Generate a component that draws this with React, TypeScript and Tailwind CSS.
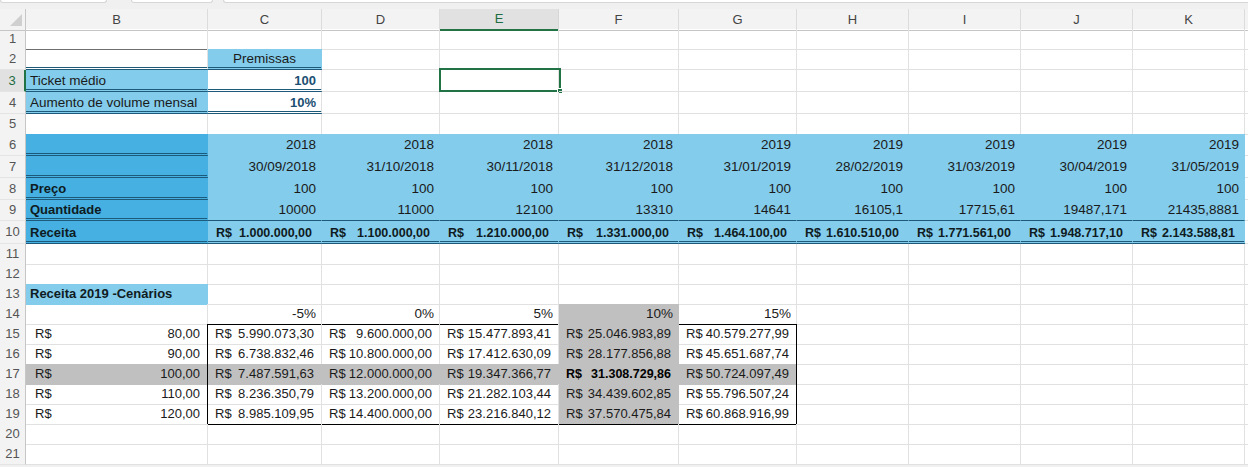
import React from "react";

const GRID =
  "grid grid-cols-[26px_182px_114px_118px_119px_120px_118px_112px_112px_112px_112px_1fr]";

// border presets
const R_GRID = "border-r border-r-[#e1e1e1]";
const B_GRID = "border-b border-b-[#e1e1e1]";
const R_L = "border-r border-r-[#83cceb]";
const B_L = "border-b border-b-[#83cceb]";
const R_M = "border-r border-r-[#45b0e1]";
const R_G = "border-r border-r-[#c0c0c0]";
const B_G = "border-b border-b-[#c0c0c0]";
const B_DBL = "border-double border-b-[3px] border-b-[#1d5a7a]";
const B_DARK = "border-b border-b-[#1d5a7a]";
const B_BLACK = "border-b border-b-black";
const R_BLACK = "border-r border-r-black";

type CellProps = {
  children?: React.ReactNode;
  className?: string;
  r?: string;
  b?: string;
  align?: "l" | "r" | "c" | "acc";
  pb?: string;
};

function Cell({ children, className = "", r = R_GRID, b = B_GRID, align = "l", pb }: CellProps) {
  const j =
    align === "r"
      ? "justify-end pr-[5px] pl-[4px]"
      : align === "c"
        ? "justify-center px-[4px]"
        : align === "acc"
          ? "justify-between"
          : "justify-start px-[4px]";
  const pad = pb ?? (b.includes("3px") ? "pb-0" : "pb-[2px]");
  return (
    <div
      className={`relative flex min-w-0 items-end overflow-visible whitespace-nowrap leading-[16px] ${pad} ${j} ${r} ${b} ${className}`}
    >
      {children}
    </div>
  );
}

function RowHead({ n, active }: { n: number; active?: boolean }) {
  return (
    <div
      className={`flex items-center justify-center border-b border-b-[#e4e4e4] text-[13px] ${
        active
          ? "border-r-2 border-r-[#217346] bg-[#e1e1e1] text-[#1e6c41]"
          : "border-r border-r-[#c6c6c6] bg-[#f3f3f3] text-[#555555]"
      }`}
    >
      {n}
    </div>
  );
}

function Row({ n, h, active, children }: { n: number; h: string; active?: boolean; children?: React.ReactNode }) {
  return (
    <div className={`${GRID} ${h}`}>
      <RowHead n={n} active={active} />
      {children}
    </div>
  );
}

function Blank({ count }: { count: number }) {
  return (
    <>
      {Array.from({ length: count }).map((_, i) => (
        <Cell key={i} />
      ))}
    </>
  );
}

const years = ["2018", "2018", "2018", "2018", "2019", "2019", "2019", "2019", "2019"];
const dates = [
  "30/09/2018",
  "31/10/2018",
  "30/11/2018",
  "31/12/2018",
  "31/01/2019",
  "28/02/2019",
  "31/03/2019",
  "30/04/2019",
  "31/05/2019",
];
const qty = ["10000", "11000", "12100", "13310", "14641", "16105,1", "17715,61", "19487,171", "21435,8881"];
const receita = [
  "1.000.000,00",
  "1.100.000,00",
  "1.210.000,00",
  "1.331.000,00",
  "1.464.100,00",
  "1.610.510,00",
  "1.771.561,00",
  "1.948.717,10",
  "2.143.588,81",
];

const prices = ["80,00", "90,00", "100,00", "110,00", "120,00"];
const scen = [
  ["5.990.073,30", "9.600.000,00", "15.477.893,41", "25.046.983,89", "40.579.277,99"],
  ["6.738.832,46", "10.800.000,00", "17.412.630,09", "28.177.856,88", "45.651.687,74"],
  ["7.487.591,63", "12.000.000,00", "19.347.366,77", "31.308.729,86", "50.724.097,49"],
  ["8.236.350,79", "13.200.000,00", "21.282.103,44", "34.439.602,85", "55.796.507,24"],
  ["8.985.109,95", "14.400.000,00", "23.216.840,12", "37.570.475,84", "60.868.916,99"],
];
const pcts = ["-5%", "0%", "5%", "10%", "15%"];

const cols = ["B", "C", "D", "E", "F", "G", "H", "I", "J", "K"];

export default function App() {
  return (
    <div
      className="h-[467px] w-[1248px] overflow-hidden bg-white text-[13.5px] text-[#1a1a1a]"
      style={{ fontFamily: '"Liberation Sans", Arial, sans-serif' }}
    >
      {/* formula bar remnants */}
      <div className="flex h-[9px] bg-[#f0f0f0]">
        <div className="h-[3px] w-[107px] rounded-b-[3px] border border-t-0 border-[#d6d6d6] bg-white" />
        <div className="ml-[24px] h-[3px] w-[82px] rounded-b-[3px] border border-t-0 border-[#d6d6d6] bg-white" />
        <div className="ml-[10px] h-[3px] flex-1 rounded-bl-[3px] border border-t-0 border-r-0 border-[#d6d6d6] bg-white" />
      </div>

      {/* column header */}
      <div className={`${GRID} h-[20px] bg-[#f3f3f3] text-[13px] text-[#444444]`}>
        <div className="relative border-r border-b border-r-[#c6c6c6] border-b-[#c6c6c6]">
          <svg className="absolute left-[10px] top-[5px]" width="12" height="12" viewBox="0 0 12 12">
            <polygon points="12,0 12,12 0,12" fill="#cfcfcf" />
          </svg>
        </div>
        {cols.map((c) =>
          c === "E" ? (
            <div
              key={c}
              className="flex items-center justify-center border-r border-r-[#d6d6d6] border-b-2 border-b-[#217346] bg-[#e1e1e1] text-[#1e6c41]"
            >
              {c}
            </div>
          ) : (
            <div
              key={c}
              className="flex items-center justify-center border-r border-b border-r-[#dcdcdc] border-b-[#c6c6c6]"
            >
              {c}
            </div>
          )
        )}
        <div className="border-b border-b-[#c6c6c6]" />
      </div>

      {/* 1 */}
      <Row n={1} h="h-[20px]">
        <Cell b="border-b border-b-[#6f6f6f]" />
        <Blank count={10} />
      </Row>

      {/* 2 */}
      <Row n={2} h="h-[21px]">
        <Cell b={B_DBL} />
        <Cell align="c" r={R_L} b={B_DBL} className="bg-[#83cceb]">
          Premissas
        </Cell>
        <Blank count={9} />
      </Row>

      {/* 3 */}
      <Row n={3} h="h-[22px]" active>
        <Cell r={R_L} b={B_DBL} className="bg-[#83cceb]">
          Ticket médio
        </Cell>
        <Cell align="r" b={B_DBL} className="text-[13px] font-bold text-[#1b4f72]">
          100
        </Cell>
        <Cell />
        <Cell>
          <div className="pointer-events-none absolute -left-px -top-[2px] h-[24px] w-[122px] border-2 border-[#217346]">
            <div className="absolute -bottom-[4px] -right-[4px] h-[6px] w-[6px] border border-white bg-[#217346]" />
          </div>
        </Cell>
        <Blank count={7} />
      </Row>

      {/* 4 */}
      <Row n={4} h="h-[22px]">
        <Cell r={R_L} b={B_DBL} className="bg-[#83cceb]">
          Aumento de volume mensal
        </Cell>
        <Cell align="r" b={B_DBL} className="text-[13px] font-bold text-[#1b4f72]">
          10%
        </Cell>
        <Blank count={9} />
      </Row>

      {/* 5 */}
      <Row n={5} h="h-[20px]">
        <Cell b={B_DARK} />
        <Blank count={10} />
      </Row>

      {/* 6 */}
      <Row n={6} h="h-[22px]">
        <Cell r={R_M} b={B_DBL} className="bg-[#45b0e1]" />
        {years.map((y, i) => (
          <Cell key={i} align="r" r={R_L} b={B_L} className="bg-[#83cceb]">
            {y}
          </Cell>
        ))}
        <Cell />
      </Row>

      {/* 7 */}
      <Row n={7} h="h-[22px]">
        <Cell r={R_M} b={B_DBL} className="bg-[#45b0e1]" />
        {dates.map((d, i) => (
          <Cell key={i} align="r" r={R_L} b={B_L} className="bg-[#83cceb]">
            {d}
          </Cell>
        ))}
        <Cell />
      </Row>

      {/* 8 */}
      <Row n={8} h="h-[22px]">
        <Cell r={R_M} b={B_DBL} className="bg-[#45b0e1] text-[13px] font-bold text-[#0f1b22]">
          Preço
        </Cell>
        {years.map((_, i) => (
          <Cell key={i} align="r" r={R_L} b={B_L} className="bg-[#83cceb]">
            100
          </Cell>
        ))}
        <Cell />
      </Row>

      {/* 9 */}
      <Row n={9} h="h-[21px]">
        <Cell r={R_M} b={B_DBL} className="bg-[#45b0e1] text-[13px] font-bold text-[#0f1b22]">
          Quantidade
        </Cell>
        {qty.map((q, i) => (
          <Cell key={i} align="r" r={R_L} b={B_DARK} className="bg-[#83cceb]">
            {q}
          </Cell>
        ))}
        <Cell />
      </Row>

      {/* 10 */}
      <Row n={10} h="h-[23px]">
        <Cell r={R_M} b={B_DBL} className="bg-[#45b0e1] text-[13px] font-bold text-[#0f1b22]">
          Receita
        </Cell>
        {receita.map((v, i) => (
          <Cell
            key={i}
            align="acc"
            r={R_L}
            b={B_DBL}
            className="bg-[#83cceb] pl-[8px] pr-[9px] text-[12.5px] font-bold text-[#0f1b22]"
          >
            <span>R$</span>
            <span>{v}</span>
          </Cell>
        ))}
        <Cell />
      </Row>

      {/* 11, 12 */}
      <Row n={11} h="h-[20px]">
        <Blank count={11} />
      </Row>
      <Row n={12} h="h-[20px]">
        <Blank count={11} />
      </Row>

      {/* 13 */}
      <Row n={13} h="h-[20px]">
        <Cell r={R_L} b={B_L} className="bg-[#83cceb] text-[13px] font-bold text-[#0f1b22]">
          Receita 2019 -Cenários
        </Cell>
        <Blank count={10} />
      </Row>

      {/* 14 */}
      <Row n={14} h="h-[20px]">
        <Cell />
        {pcts.map((p, i) => (
          <Cell
            key={i}
            align="r"
            r={i === 3 ? R_G : R_GRID}
            b={B_BLACK}
            className={i === 3 ? "bg-[#c0c0c0]" : ""}
          >
            {p}
          </Cell>
        ))}
        <Blank count={5} />
      </Row>

      {/* 15 - 19 */}
      {prices.map((p, ri) => {
        const hl = ri === 2;
        const last = ri === 4;
        return (
          <Row key={ri} n={15 + ri} h="h-[20px]">
            <Cell
              align="acc"
              r={R_BLACK}
              b={hl ? B_G : B_GRID}
              className={`pl-[9px] pr-[7px] text-[13px] ${hl ? "bg-[#c0c0c0]" : ""}`}
            >
              <span>R$</span>
              <span>{p}</span>
            </Cell>
            {scen[ri].map((v, ci) => {
              const gray = hl || ci === 3;
              const right = ci === 4 ? R_BLACK : gray ? R_G : R_GRID;
              const bottom = last ? B_BLACK : gray ? B_G : B_GRID;
              const bold = hl && ci === 3;
              return (
                <Cell
                  key={ci}
                  align="acc"
                  r={right}
                  b={bottom}
                  className={`pl-[7px] pr-[7px] ${gray ? "bg-[#c0c0c0]" : ""} ${
                    bold ? "text-[12.5px] font-bold text-black" : "text-[13px]"
                  }`}
                >
                  <span>R$</span>
                  <span>{v}</span>
                </Cell>
              );
            })}
            <Blank count={5} />
          </Row>
        );
      })}

      {/* 20, 21 */}
      <Row n={20} h="h-[20px]">
        <Blank count={11} />
      </Row>
      <Row n={21} h="h-[20px]">
        <Blank count={11} />
      </Row>

      <div className="h-[3px] bg-[#f0f0f0]" />
    </div>
  );
}
